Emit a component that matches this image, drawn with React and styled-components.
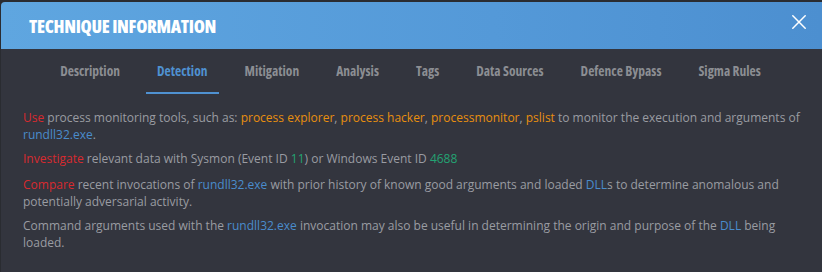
import React from "react";
import styled, { createGlobalStyle } from "styled-components";

const Global = createGlobalStyle`
  html, body { margin: 0; padding: 0; background: #2a2c31; }
  body { font-family: "Open Sans", "Liberation Sans", sans-serif; }
`;

const Modal = styled.div`
  width: 822px;
  height: 272px;
  box-sizing: border-box;
  padding-top: 2px;
  background: #2a2c31;
  display: flex;
  flex-direction: column;
`;

const Panel = styled.div`
  flex: 1;
  margin-left: 1px;
  background: #33353e;
  border-top-left-radius: 4px;
  display: flex;
  flex-direction: column;
  overflow: hidden;
`;

const Header = styled.div`
  height: 47px;
  background: linear-gradient(90deg, #5fa6e0 0%, #5499d8 60%, #4c8fd0 100%);
  display: flex;
  align-items: center;
  justify-content: space-between;
  padding: 0 16px 0 28px;
`;

const Title = styled.h1`
  margin: 0;
  font-family: "Open Sans", sans-serif;
  font-stretch: 75%;
  font-weight: 800;
  font-size: 18px;
  letter-spacing: -0.3px;
  color: #ffffff;
`;

const Close = styled.button`
  align-self: flex-start;
  margin-top: 13px;
  border: 0;
  background: none;
  padding: 0;
  width: 14px;
  height: 14px;
  display: flex;
  cursor: pointer;
`;

const Tabs = styled.nav`
  display: flex;
  justify-content: center;
  gap: 15px;
  height: 45px;
  padding-right: 2px;
`;

const Tab = styled.div`
  padding: 0 11px;
  display: flex;
  align-items: center;
  font-family: "Open Sans", sans-serif;
  font-stretch: 75%;
  font-weight: 700;
  font-size: 13.5px;
  color: ${(p) => (p.$active ? "#4f91d1" : "#8c8e93")};
  border-bottom: 2px solid ${(p) => (p.$active ? "#4f91d1" : "transparent")};
  box-sizing: border-box;
`;

const Body = styled.div`
  padding: 15px 22px 0 22px;
`;

const P = styled.p`
  margin: 0 0 ${(p) => (p.$wide ? 9 : 7)}px 0;
  font-size: 12px;
  line-height: 17px;
  color: #9a9ca2;
`;

const Hl = styled.span`
  color: ${(p) =>
    ({ red: "#d82a2f", orange: "#e88f0f", blue: "#4a8ccc", green: "#23a373" }[p.$c])};
`;

const tabs = [
  "Description",
  "Detection",
  "Mitigation",
  "Analysis",
  "Tags",
  "Data Sources",
  "Defence Bypass",
  "Sigma Rules",
];

export default function App() {
  return (
    <>
      <Global />
      <Modal>
        <Panel>
          <Header>
            <Title>TECHNIQUE INFORMATION</Title>
            <Close aria-label="close">
              <svg width="14" height="14" viewBox="0 0 14 14">
                <path d="M0.8 0.8 L13.2 13.2 M13.2 0.8 L0.8 13.2" stroke="#fff" strokeWidth="1.5" strokeLinecap="round" />
              </svg>
            </Close>
          </Header>
          <Tabs>
            {tabs.map((t) => (
              <Tab key={t} $active={t === "Detection"}>
                {t}
              </Tab>
            ))}
          </Tabs>
          <Body>
            <P>
              <Hl $c="red">Use</Hl> process monitoring tools, such as:{" "}
              <Hl $c="orange">process explorer</Hl>, <Hl $c="orange">process hacker</Hl>,{" "}
              <Hl $c="orange">processmonitor</Hl>, <Hl $c="orange">pslist</Hl> to monitor the
              execution and arguments of <Hl $c="blue">rundll32.exe</Hl>.
            </P>
            <P $wide>
              <Hl $c="red">Investigate</Hl> relevant data with Sysmon (Event ID{" "}
              <Hl $c="green">11</Hl>) or Windows Event ID <Hl $c="green">4688</Hl>
            </P>
            <P>
              <Hl $c="red">Compare</Hl> recent invocations of <Hl $c="blue">rundll32.exe</Hl> with
              prior history of known good arguments and loaded <Hl $c="blue">DLL</Hl>s to determine
              anomalous and potentially adversarial activity.
            </P>
            <P>
              Command arguments used with the <Hl $c="blue">rundll32.exe</Hl> invocation may also be
              useful in determining the origin and purpose of the <Hl $c="blue">DLL</Hl> being
              loaded.
            </P>
          </Body>
        </Panel>
      </Modal>
    </>
  );
}
